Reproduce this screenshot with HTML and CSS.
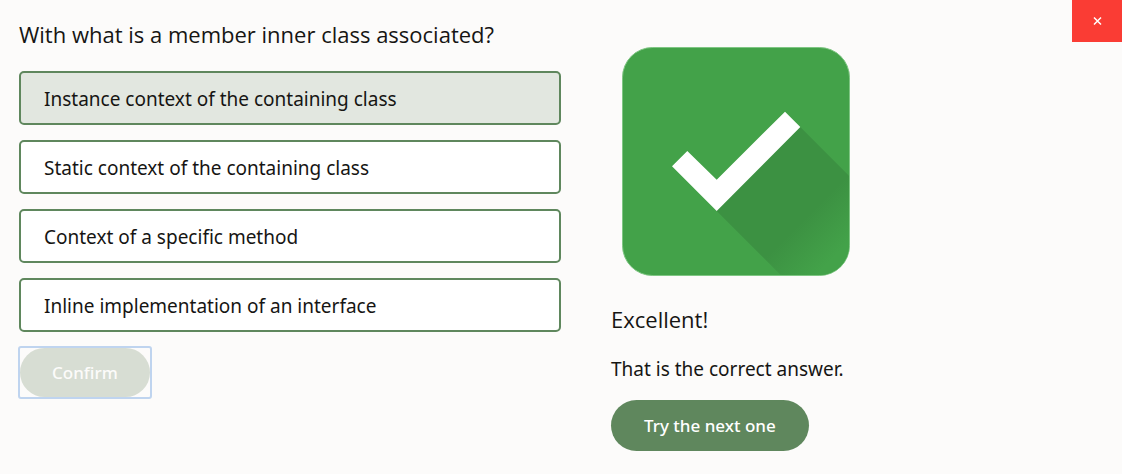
FILE: index.html
```html
<!DOCTYPE html>
<html lang="en">
<head>
<meta charset="utf-8">
<meta name="viewport" content="width=device-width, initial-scale=1">
<title>Quiz</title>
<link rel="stylesheet" href="styles.css">
</head>
<body>
<button class="close" type="button" aria-label="Close">
  <svg class="close-icon" viewBox="0 0 10 10" aria-hidden="true"><path d="M2 1.500l7 7M9 1.500l-7 7"/></svg>
</button>
<main class="quiz">
  <section class="question">
    <h1 class="title">With what is a member inner class associated?</h1>
    <div class="options">
      <button class="option selected" type="button" aria-pressed="true">Instance context of the containing class</button>
      <button class="option" type="button" aria-pressed="false">Static context of the containing class</button>
      <button class="option" type="button" aria-pressed="false">Context of a specific method</button>
      <button class="option" type="button" aria-pressed="false">Inline implementation of an interface</button>
    </div>
    <div class="confirm-frame"><button class="pill" type="button" disabled>Confirm</button></div>
  </section>
  <section class="result">
    <svg class="tick" viewBox="0 0 250 250" role="img" aria-label="Correct">
      <defs>
        <linearGradient id="fade" gradientUnits="userSpaceOnUse" x1="188" y1="188" x2="222" y2="222">
          <stop offset="0" stop-color="#3c9142"/>
          <stop offset="1" stop-color="#43a249"/>
        </linearGradient>
        <clipPath id="tile"><rect x="12" y="12" width="226" height="227" rx="29"/></clipPath>
      </defs>
      <rect x="11.500" y="11.500" width="227" height="228" rx="30" fill="#43a249" stroke="#7fc683"/>
      <path clip-path="url(#tile)" fill="url(#fade)" d="M105.700 175L189.300 91L250 151.700V250H180.700Z"/>
      <path fill="#fff" d="M61 130.300L76.300 115L105.700 143.700L174 75.700L189.300 91L105.700 175Z"/>
    </svg>
    <h2 class="verdict">Excellent!</h2>
    <p class="message">That is the correct answer.</p>
    <button class="pill" type="button">Try the next one</button>
  </section>
</main>
</body>
</html>
```
FILE: styles.css
```css
* {
  box-sizing: border-box;
}

body {
  margin: 0;
  background: #fcfbfa;
  color: #161513;
  font-family: "Noto Sans", "Open Sans", sans-serif;
  font-size: 19px;
}

h1,
h2,
p {
  margin: 0;
  font-weight: 400;
}

button {
  border: 0;
  font-family: inherit;
}

.quiz {
  display: grid;
  grid-template-columns: 1fr 1fr;
}

.question {
  padding: 18px 0 0 19px;
}

.title,
.verdict {
  font-family: "Open Sans", "Noto Sans", sans-serif;
  font-size: 22px;
  line-height: 32px;
}

.options {
  display: grid;
  gap: 15px;
  margin-top: 21px;
}

.option {
  padding: 12px 23px 10px;
  border: 2px solid #5f875d;
  border-radius: 5px;
  background: #fff;
  color: inherit;
  font-size: 19px;
  line-height: 28px;
  text-align: left;
}

.option.selected {
  background: #e2e7e0;
}

.confirm-frame {
  width: fit-content;
  margin: 14px 0 0 -1px;
  border: 2px solid #bfd4ef;
  border-radius: 3px;
}

.pill {
  display: block;
  padding: 12px 33px;
  border-radius: 26px;
  background: #5f875d;
  color: #fff;
  font-size: 17px;
  font-weight: 500;
  line-height: 27px;
}

.confirm-frame .pill {
  padding: 11px 32px;
  background: #d7ddd3;
  color: #fcfbfa;
}

.result {
  padding: 36px 0 23px 50px;
}

.tick {
  display: block;
  width: 250px;
}

.verdict {
  margin-top: 17px;
}

.message {
  margin: 20px 0 17px;
  line-height: 28px;
}

.close {
  position: absolute;
  top: 0;
  right: 0;
  padding: 16px 20px;
  background: #fa3c34;
}

.close-icon {
  display: block;
  width: 10px;
  height: 10px;
  fill: none;
  stroke: #fff;
  stroke-width: 1.5;
}
```
